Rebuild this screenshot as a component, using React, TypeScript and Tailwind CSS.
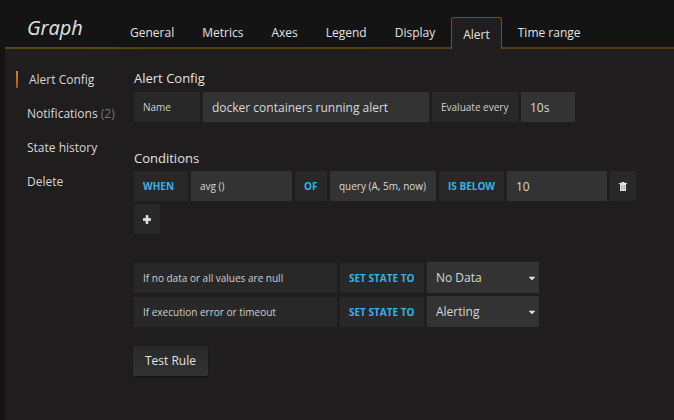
import type { ReactNode } from "react"
import { FaCaretDown, FaPlus } from "react-icons/fa"
import { cva } from "class-variance-authority"
import clsx from "clsx"

const tabs = ["General", "Metrics", "Axes", "Legend", "Display", "Alert", "Time range"]

const sections: { name: string; count?: number }[] = [
  { name: "Alert Config" },
  { name: "Notifications", count: 2 },
  { name: "State history" },
  { name: "Delete" },
]

const noDataRows = [
  { id: "no-data", label: "If no data or all values are null", value: "No Data" },
  { id: "exec-error", label: "If execution error or timeout", value: "Alerting" },
]

const states = ["Alerting", "No Data", "Keep Last State", "Ok"]

const cell = cva("flex h-[30px] shrink-0 items-center px-[9px] pt-px text-[10px] whitespace-nowrap", {
  variants: {
    tone: {
      label: "bg-[#282828] text-[#d0d0d0]",
      keyword: "bg-[#282828] font-bold text-[#33b5e5]",
      value: "bg-[#333333] text-[#d8d9da]",
    },
  },
})

const inputClass = "h-[30px] min-w-0 bg-[#333333] px-[9px] text-[12px] text-[#d8d9da] outline-none"

function Heading({ children }: { children: ReactNode }) {
  return <h3 className="text-[13px] leading-5 text-[#e3e3e3]">{children}</h3>
}

function TrashIcon() {
  return (
    <svg viewBox="0 0 8 9" className="h-[9px] w-[8px]" aria-hidden="true">
      <path d="M2.5 0h3v1H8v1H0V1h2.5z" fill="#e3e3e3" />
      <path d="M1 2h6v7H1z" fill="#e3e3e3" />
      <path d="M2.5 3.2v4.5M4 3.2v4.5M5.5 3.2v4.5" stroke="#77717c" strokeWidth=".5" />
    </svg>
  )
}

function StateSelect({ id, value }: { id: string; value: string }) {
  return (
    <div className="relative w-[112px] shrink-0">
      <select
        id={id}
        defaultValue={value}
        className="h-[31px] w-full appearance-none bg-[#333333] px-[9px] text-[12px] text-[#d8d9da] outline-none"
      >
        {states.map((state) => (
          <option key={state}>{state}</option>
        ))}
      </select>
      <FaCaretDown className="pointer-events-none absolute top-[11px] right-[2px] h-[10px] w-[10px] text-[#e3e3e3]" />
    </div>
  )
}

export default function App() {
  return (
    <div className="min-h-screen bg-[#141414] pl-[5px] font-['Open_Sans','Noto_Sans',sans-serif] text-[#d8d9da]">
      <header className="bg-gradient-to-r from-[#5a4614] to-[#56360f] pb-[2px]">
        <div className="flex h-[47px] items-end bg-[#141414] pl-[22px]">
          <h2 className="w-[91px] shrink-0 pb-[5px] text-[20px] leading-[28px] text-[#e3e3e3] italic">Graph</h2>
          <nav className="-mb-[2px] flex items-end gap-[4px]">
            {tabs.map((tab) => (
              <button
                key={tab}
                type="button"
                className={clsx(
                  "h-[32px] text-[12px] whitespace-nowrap text-[#e3e3e3]",
                  tab === "Alert"
                    ? "rounded-t-[3px] border border-b-0 border-[#7a4a1c] bg-[#1f1d1e] px-[11px] pt-[2px]"
                    : "px-[12px]",
                )}
              >
                {tab}
              </button>
            ))}
          </nav>
        </div>
      </header>

      <div className="flex min-h-[371px] bg-[#1f1d1e]">
        <aside className="w-[129px] shrink-0 pt-[22px] pl-[11px]">
          <ul className="flex flex-col gap-[17px]">
            {sections.map((section, i) => (
              <li key={section.name} className="flex">
                {i === 0 && <span className="w-[2px] bg-gradient-to-b from-[#c09010] to-[#c04010]" />}
                <a href="#" className="pl-[11px] text-[12px] leading-[17px] whitespace-nowrap">
                  {section.name}
                  {section.count && <span className="text-[#767676]"> ({section.count})</span>}
                </a>
              </li>
            ))}
          </ul>
        </aside>

        <main className="min-w-0 flex-1 pt-[19px]">
          <Heading>Alert Config</Heading>
          <div className="mt-[4px] flex gap-[3px]">
            <label htmlFor="name" className={cell({ tone: "label", className: "w-[66px]" })}>
              Name
            </label>
            <input id="name" defaultValue="docker containers running alert" className={clsx(inputClass, "w-[226px]")} />
            <label htmlFor="every" className={cell({ tone: "label", className: "w-[86px]" })}>
              Evaluate every
            </label>
            <input id="every" defaultValue="10s" className={clsx(inputClass, "w-[54px]")} />
          </div>

          <div className="mt-[26px]">
            <Heading>Conditions</Heading>
          </div>
          <div className="mt-[3px] flex flex-col gap-[3px]">
            <div className="flex gap-[3px]">
              <span className={cell({ tone: "keyword", className: "w-[54px]" })}>WHEN</span>
              <button type="button" className={cell({ tone: "value", className: "w-[101px]" })}>
                avg ()
              </button>
              <span className={cell({ tone: "keyword", className: "w-[32px]" })}>OF</span>
              <button type="button" className={cell({ tone: "value", className: "w-[106px]" })}>
                query (A, 5m, now)
              </button>
              <button type="button" className={cell({ tone: "keyword", className: "w-[65px]" })}>
                IS BELOW
              </button>
              <input aria-label="Threshold" defaultValue="10" className={clsx(inputClass, "w-[100px]")} />
              <button type="button" aria-label="Remove condition" className={cell({ tone: "label" })}>
                <TrashIcon />
              </button>
            </div>
            <div className="flex">
              <button type="button" aria-label="Add condition" className={cell({ tone: "label" })}>
                <FaPlus className="h-[9px] w-[8px] stroke-[#e3e3e3] stroke-[60] text-[#e3e3e3]" />
              </button>
            </div>
          </div>

          <div className="mt-[28px] flex flex-col gap-[3px]">
            {noDataRows.map((row) => (
              <div key={row.id} className="flex items-end gap-[3px]">
                <label htmlFor={row.id} className={cell({ tone: "label", className: "w-[203px]" })}>
                  {row.label}
                </label>
                <span className={cell({ tone: "keyword", className: "w-[84px]" })}>SET STATE TO</span>
                <StateSelect id={row.id} value={row.value} />
              </div>
            ))}
          </div>

          <button
            type="button"
            className="mt-[19px] -ml-px h-[30px] rounded-[2px] bg-gradient-to-b from-[#292929] to-[#323232] px-[12px] text-[12px] text-[#e3e3e3] shadow-[0_1px_1px_#111111]"
          >
            Test Rule
          </button>
        </main>
      </div>
    </div>
  )
}
